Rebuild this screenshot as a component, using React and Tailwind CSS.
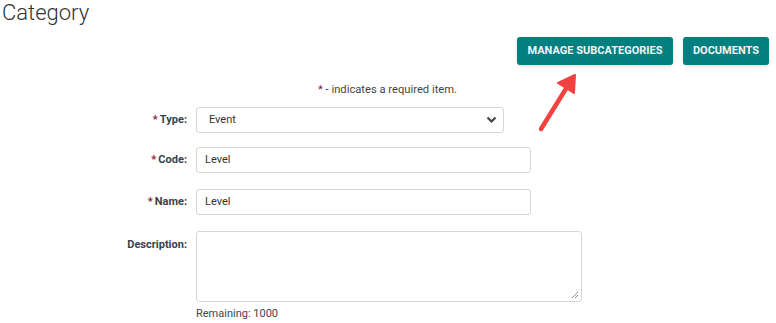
import React from 'react';

const Label = ({ required, children, top }) => (
    <div className={`w-[187px] shrink-0 text-right text-[11px] font-bold text-[#3a3f48] ${top ? 'pt-[6px]' : ''}`}>
        {required && <span className="text-[#8a1838] mr-[2px]">*</span>}
        {children}
    </div>
);

export default function App() {
    return (
        <div className="w-[776px] h-[323px] bg-white overflow-hidden text-[#333]" style={{ fontFamily: 'Roboto, "Liberation Sans", sans-serif' }}>
            <h1 className="pl-[2px] text-[22px] leading-[26px] font-light text-[#333]">Category</h1>

            <div className="relative flex justify-end gap-[10px] pr-[7px] mt-[11px]">
                <button className="h-[28px] w-[156px] rounded-[3px] bg-[#037f7f] text-[#f4f4f4] text-[11px] font-bold uppercase shadow-sm">
                    Manage Subcategories
                </button>
                <button className="h-[28px] w-[86px] rounded-[3px] bg-[#037f7f] text-[#f4f4f4] text-[11px] font-bold uppercase shadow-sm">
                    Documents
                </button>
                <svg className="absolute left-[534px] top-[32px]" width="48" height="66" viewBox="0 0 48 66">
                    <line x1="7" y1="60" x2="33" y2="18" stroke="#f2413f" strokeWidth="4.5" strokeLinecap="round" />
                    <polygon points="41,6 24,14 40,24" fill="#f2413f" stroke="#f2413f" strokeWidth="2" strokeLinejoin="round" />
                </svg>
            </div>

            <div className="pl-[318px] mt-[17px] text-[11.2px] leading-[16px] text-[#444]">
                <span className="text-[#8a1838]">*</span> - indicates a required item.
            </div>

            <div className="flex flex-col mt-[9px]">
                <div className="flex items-center gap-[9px]">
                    <Label required>Type:</Label>
                    <div className="relative w-[308px] h-[26px] border border-[#d6d6d6] rounded-[3px] flex items-center pl-[12px] text-[11px] text-[#333]">
                        Event
                        <svg className="absolute right-[6px] top-[8px]" width="11" height="8" viewBox="0 0 11 8">
                            <path d="M1.5 1.5 L5.5 5.5 L9.5 1.5" fill="none" stroke="#444" strokeWidth="2.2" />
                        </svg>
                    </div>
                </div>

                <div className="flex items-center gap-[9px] mt-[14px]">
                    <Label required>Code:</Label>
                    <div className="w-[335px] h-[26px] border border-[#d6d6d6] rounded-[3px] flex items-center pl-[8px] text-[11px] text-[#333]">
                        Level
                    </div>
                </div>

                <div className="flex items-center gap-[9px] mt-[16px]">
                    <Label required>Name:</Label>
                    <div className="w-[335px] h-[26px] border border-[#d6d6d6] rounded-[3px] flex items-center pl-[8px] text-[11px] text-[#333]">
                        Level
                    </div>
                </div>

                <div className="flex items-start gap-[9px] mt-[16px]">
                    <Label top>Description:</Label>
                    <div className="flex flex-col">
                        <div className="relative w-[386px] h-[71px] border border-[#d6d6d6] rounded-[3px]">
                            <svg className="absolute right-[2px] bottom-[2px]" width="8" height="8" viewBox="0 0 8 8">
                                <path d="M7 1 L1 7 M7 4 L4 7" stroke="#888" strokeWidth="1" />
                            </svg>
                        </div>
                        <div className="mt-[4px] text-[11px] leading-[16px] text-[#444]">Remaining: 1000</div>
                    </div>
                </div>
            </div>
        </div>
    );
}
